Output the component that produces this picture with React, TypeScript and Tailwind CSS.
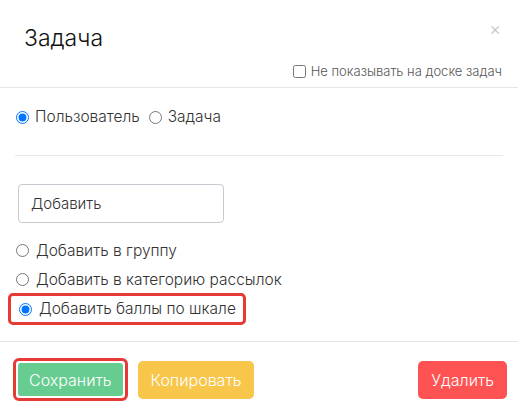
export default function App() {
  return (
    <div className="relative w-[518px] h-[411px] bg-white text-[#333] font-light overflow-hidden" style={{ fontFamily: "Inter, 'Noto Sans', sans-serif" }}>
      <div className="relative h-[88px] border-b border-[#e5e5e5]">
        <h4 className="pl-6 pt-[22px] text-[23px] leading-8 text-[#111]">Задача</h4>
        <button className="absolute right-[17px] top-[19px] text-[#c4c4c4] text-[18px] leading-5">×</button>
        <label className="absolute right-4 top-[61px] flex items-center gap-[5px] text-[13px] leading-5 text-[#555]">
          <input type="checkbox" className="w-[13px] h-[13px] m-0" />
          Не показывать на доске задач
        </label>
      </div>

      <div className="px-[15px]">
        <div className="flex items-center h-[58px] text-[15.5px]">
          <label className="flex items-center gap-[6px] pl-[1px]">
            <input type="radio" name="t" defaultChecked className="m-0 w-[13px] h-[13px]" />
            Пользователь
          </label>
          <label className="flex items-center gap-[6px] ml-[9px]">
            <input type="radio" name="t" className="m-0 w-[13px] h-[13px]" />
            Задача
          </label>
        </div>
        <hr className="border-[#e8e8e8] mt-[9px]" />

        <div className="pt-7 pl-[3px]">
          <input
            type="text"
            defaultValue="Добавить"
            className="w-[206px] h-[39px] border border-[#c9c9d1] rounded-[4px] px-3 text-[15px] font-light text-[#333] outline-none"
          />
        </div>

        <div className="mt-[13px] flex flex-col text-[15.5px]">
          <label className="flex items-center gap-[7px] h-[29px] pl-[1px]">
            <input type="radio" name="a" className="m-0 w-[13px] h-[13px]" />
            Добавить в группу
          </label>
          <label className="flex items-center gap-[7px] h-[29px] pl-[1px]">
            <input type="radio" name="a" className="m-0 w-[13px] h-[13px]" />
            Добавить в категорию рассылок
          </label>
          <label className="flex items-center gap-[7px] h-[32px] -ml-[7px] mr-auto pr-[7px] pl-[8px] border-[3px] border-[#e53a35] rounded-[5px] -mt-[1px]">
            <input type="radio" name="a" defaultChecked className="m-0 w-[13px] h-[13px]" />
            Добавить баллы по шкале
          </label>
        </div>
      </div>

      <div className="absolute left-0 right-0 top-[341px] border-t border-[#e5e5e5] flex items-center justify-between px-[13px] pt-[16px]">
        <div className="flex items-center gap-[10px]">
          <div className="p-[2px] border-[3px] border-[#e53a35] rounded-[6px] bg-white">
            <button className="h-[33px] px-[11px] bg-[#66cc8f] text-white text-[16px] font-light rounded-[3px]">Сохранить</button>
          </div>
          <button className="h-[38px] px-[13px] bg-[#f7c64a] text-white text-[16px] font-light rounded-[5px]">Копировать</button>
        </div>
        <button className="h-[38px] px-[13px] mr-[-2px] bg-[#ff5353] text-white text-[16px] font-light rounded-[5px]">Удалить</button>
      </div>
    </div>
  );
}
